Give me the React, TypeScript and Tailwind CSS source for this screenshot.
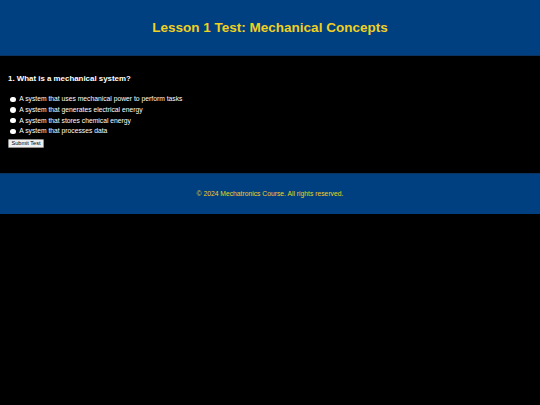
import React from "react";

const options = [
  "A system that uses mechanical power to perform tasks",
  "A system that generates electrical energy",
  "A system that stores chemical energy",
  "A system that processes data",
];

export default function App() {
  return (
    <div
      className="min-h-[405px] w-full bg-black text-white"
      style={{ fontFamily: '"Liberation Sans", Arial, sans-serif' }}
    >
      <header className="h-[56px] bg-[#004080] border-b border-[#0c3260] flex items-center justify-center">
        <h1 className="text-[13.5px] leading-[16px] font-bold text-[#f0d020]">
          Lesson 1 Test: Mechanical Concepts
        </h1>
      </header>

      <main className="px-[8px] pt-[18px]">
        <h3 className="text-[7.9px] leading-[9px] font-bold text-white">
          1. What is a mechanical system?
        </h3>
        <div className="mt-[11px] flex flex-col">
          {options.map((o, i) => (
            <label key={i} className="h-[10.7px] flex items-center text-[6.75px] leading-[8px] text-white">
              <input
                type="radio"
                name="q1"
                className="appearance-none w-[5.5px] h-[5.5px] rounded-full bg-white ml-[2.2px] mr-[3.5px] shrink-0"
              />
              <span>{o}</span>
            </label>
          ))}
        </div>
        <button className="mt-[1.8px] h-[9px] w-[36px] flex items-center justify-center bg-[#efefef] border border-[#8f8f8f] rounded-[1px] text-[5.6px] leading-[6px] text-black">
          Submit Test
        </button>
      </main>

      <footer className="mt-[25px] h-[41px] bg-[#004080] border-t border-[#0c3260] flex items-center justify-center">
        <p className="text-[6.75px] leading-[8px] text-[#f0d020]">
          © 2024 Mechatronics Course. All rights reserved.
        </p>
      </footer>
    </div>
  );
}
